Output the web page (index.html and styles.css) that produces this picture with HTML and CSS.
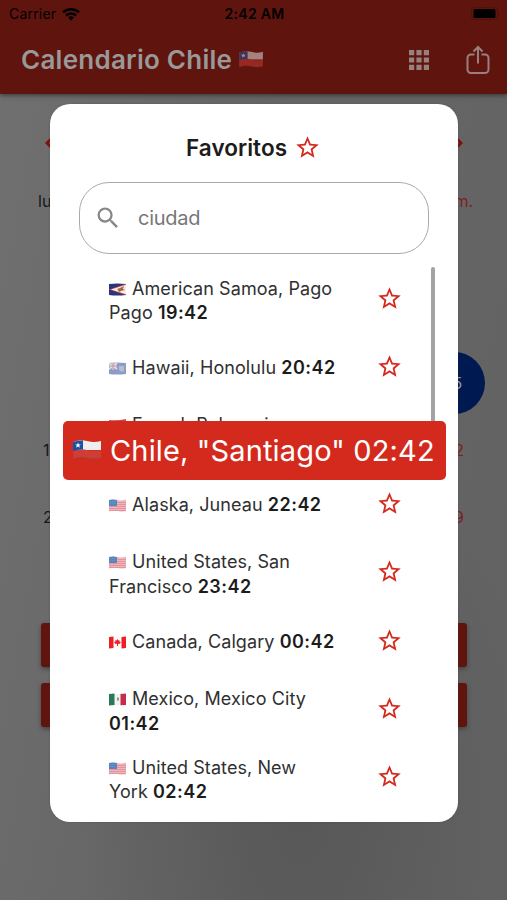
FILE: index.html
```html
<!DOCTYPE html>
<html lang="es">
<head>
<meta charset="utf-8">
<title>Calendario Chile</title>
<link rel="stylesheet" href="styles.css">
</head>
<body>
<svg class="defs" width="0" height="0" aria-hidden="true">
  <symbol id="star" viewBox="0 0 24 24"><path d="M22 9.24l-7.19-.62L12 2 9.19 8.63 2 9.24l5.46 4.73L5.82 21 12 17.27 18.18 21l-1.63-7.03L22 9.24zM12 15.4l-3.76 2.27 1-4.28-3.32-2.88 4.38-.38L12 6.1l1.71 4.04 4.38.38-3.32 2.88 1 4.28L12 15.4z"/></symbol>
  <symbol id="chile" viewBox="0 0 28 20"><path fill="#eee" d="M0 2Q7-1 14 1T28 1V10H0z"/><path fill="#cf3e36" d="M0 11Q7 8 14 10T28 10V18Q21 20 14 18T0 19z"/><path fill="#1951a5" d="M0 2Q5 0 10 .5V9.500Q5 9 0 11z"/><path fill="#fff" d="M5 2.500l.8 2h2L6.200 5.800l.6 2L5 6.600 3.200 7.800l.6-2L2.200 4.500h2z"/><path fill="none" stroke="#555" stroke-opacity=".4" d="M.5 18.500Q7 17 14 18T27.500 18"/></symbol>
  <symbol id="usa" viewBox="0 0 17 13"><path fill="#efb5bd" d="M0 1Q4 0 8 1T17 .5V12Q13 13 9 12T0 12.500z"/><path stroke="#e28d99" stroke-width=".9" d="M0 3.500h17M0 5.500h17M0 7.500h17M0 9.500h17M0 11.500h17"/><path fill="#5785bd" d="M0 1Q4 0 8 1V7H0z"/><path stroke="#7d9fce" stroke-width=".6" stroke-dasharray="1 1" d="M1 2.500h6M1 4.500h6"/></symbol>
  <symbol id="samoa" viewBox="0 0 17 13"><path fill="#29347c" d="M0 1Q8 0 17 1V12Q8 13 0 12z"/><path fill="#c94b53" d="M0 6.500L17 .8V12.200z"/><path fill="#f2eeee" d="M2 6.500L17 1.800V11.200z"/><path fill="#a66a35" d="M8 6l3-1 4-2-1 3 2 1-4 1-2 1-1-2z"/></symbol>
  <symbol id="hawaii" viewBox="0 0 17 13"><path fill="#8d9bc7" d="M0 1Q8 0 17 1V12Q8 13 0 12z"/><path stroke="#dfdfe9" stroke-width="1.800" d="M0 1l8 6M8 1L0 7M4 1v7M0 4h8"/><path stroke="#cd8190" stroke-width=".9" d="M0 4h8M4 1v7"/><path fill="#b9bcca" d="M10 4h5v5l-2 1-3-2z"/></symbol>
  <symbol id="canada" viewBox="0 0 17 13"><path fill="#fafafa" d="M0 1h17v11H0z"/><path fill="#ec2026" d="M0 1l4.500-.5V12L0 12.500zM12.500 1L17 .5V12l-4.500.5zM8.500 3l1 1.500 1-.5-.2 1.500L12 6l-1.500 2-1.500-.2V10H8V7.800L6.500 8 5 6l1.500-.5L6.300 4l1.200.5z"/></symbol>
  <symbol id="mexico" viewBox="0 0 17 13"><path fill="#f2f2f2" d="M0 1h17v11H0z"/><path fill="#297958" d="M0 1l5.500-.5V12L0 12.500z"/><path fill="#c52c4d" d="M11.500 1L17 .5V12l-5.500.3z"/><path fill="#8a9a77" d="M8 4l2 1v2l-1 1-1-1z"/></symbol>
  <symbol id="polynesia" viewBox="0 0 17 13"><path fill="#fafafa" d="M0 1h17v11H0z"/><path fill="#ce4a4e" d="M0 1Q8 2 17 0V4H0zM0 9h17v3H0z"/></symbol>
</svg>
<div class="screen">
  <div class="app">
    <header class="top">
      <div class="status">
        <div class="carrier">Carrier
          <svg width="18" height="14" viewBox="0 0 18 14"><g fill="none" stroke="#000" stroke-width="2.500"><path d="M1 5.400a11.500 11.500 0 0 1 16 0"/><path d="M4 8.500a7.200 7.200 0 0 1 10 0"/></g><path d="M6.100 10.600a4.300 4.300 0 0 1 5.800 0L9 13.700z"/></svg>
        </div>
        <div class="clock">2:42 AM</div>
        <div class="battery"><svg width="29" height="14" viewBox="0 0 29 14"><rect x=".5" y=".5" width="26" height="12" rx="3.500" fill="none" stroke="#4e110b"/><rect x="2.500" y="2" width="22" height="9" rx="1.500"/><path fill="#450f0a" d="M27.500 4.500q1.500 2 0 4z"/></svg></div>
      </div>
      <div class="bar">
        <h1>Calendario Chile</h1>
        <svg class="bar-flag" width="24" height="17"><use href="#chile"/></svg>
        <svg class="grid-icon" width="20" height="20" viewBox="0 0 20 20"><path d="M0 0h5.200v5.200H0zM7.400 0h5.200v5.200H7.400zM14.800 0H20v5.200h-5.200zM0 7.400h5.200v5.200H0zM7.400 7.400h5.200v5.200H7.400zM14.800 7.400H20v5.200h-5.200zM0 14.800h5.200V20H0zM7.400 14.800h5.200V20H7.400zM14.800 14.800H20V20h-5.200z"/></svg>
        <svg class="share-icon" width="24" height="30" viewBox="0 0 24 30"><path d="M8.500 9.500H5A3.500 3.500 0 0 0 1.500 13v11.500A3.500 3.500 0 0 0 5 28h14a3.500 3.500 0 0 0 3.500-3.500V13A3.500 3.500 0 0 0 19 9.500h-3.500M12 18.500V2.500M7.500 6.500L12 2l4.500 4.500"/></svg>
      </div>
    </header>
    <div class="month"><svg width="12" height="12" viewBox="0 0 12 12"><path d="M0 6l5-5 2 2-3 3 3 3-2 2z"/></svg><svg width="12" height="12" viewBox="0 0 12 12"><path d="M12 6L7 1 5 3l3 3-3 3 2 2z"/></svg></div>
    <div class="week names"><span>lun.</span><span class="red">dom.</span></div>
    <div class="week"><span></span><span class="today">15</span></div>
    <div class="week"><span class="num">16</span><span class="red num">22</span></div>
    <div class="week"><span class="num">23</span><span class="red num">29</span></div>
    <div class="actions"><div class="action"></div><div class="action"></div></div>
  </div>
  <div class="dialog">
    <h2>Favoritos <svg class="star"><use href="#star"/></svg></h2>
    <div class="search"><svg width="28" height="28" viewBox="0 0 24 24"><path d="M15.500 14h-.79l-.28-.27A6.470 6.470 0 0 0 16 9.500 6.500 6.500 0 1 0 9.500 16c1.610 0 3.090-.59 4.230-1.570l.27.28v.79l5 4.990L20.490 19l-4.990-5zm-6 0C7.010 14 5 11.990 5 9.500S7.010 5 9.500 5 14 7.010 14 9.500 11.990 14 9.500 14z"/></svg><span>ciudad</span></div>
    <div class="list">
      <div class="row"><p><svg class="flag"><use href="#samoa"/></svg>American Samoa, Pago<br>Pago <b>19:42</b></p><svg class="star"><use href="#star"/></svg></div>
      <div class="row single"><p><svg class="flag"><use href="#hawaii"/></svg>Hawaii, Honolulu <b>20:42</b></p><svg class="star"><use href="#star"/></svg></div>
      <div class="row covered"><p><svg class="flag"><use href="#polynesia"/></svg>French Polynesia,</p></div>
      <div class="row single"><p><svg class="flag"><use href="#usa"/></svg>Alaska, Juneau <b>22:42</b></p><svg class="star"><use href="#star"/></svg></div>
      <div class="row"><p><svg class="flag"><use href="#usa"/></svg>United States, San<br>Francisco <b>23:42</b></p><svg class="star"><use href="#star"/></svg></div>
      <div class="row single"><p><svg class="flag"><use href="#canada"/></svg>Canada, Calgary <b>00:42</b></p><svg class="star"><use href="#star"/></svg></div>
      <div class="row"><p><svg class="flag"><use href="#mexico"/></svg>Mexico, Mexico City<br><b>01:42</b></p><svg class="star"><use href="#star"/></svg></div>
      <div class="row"><p><svg class="flag"><use href="#usa"/></svg>United States, New<br>York <b>02:42</b></p><svg class="star"><use href="#star"/></svg></div>
    </div>
    <div class="thumb"></div>
  </div>
  <div class="toast"><svg width="28" height="20"><use href="#chile"/></svg><span>Chile, "Santiago" 02:42</span></div>
</div>
</body>
</html>
```
FILE: styles.css
```css
* { box-sizing: border-box; }
body { margin: 0; font-family: Inter, "Liberation Sans", sans-serif; color: #303030; }
h1, h2, p { margin: 0; }
.defs { position: absolute; }
.screen { position: relative; width: 507px; height: 900px; overflow: hidden; }
.app {
  height: 900px;
  background:
    radial-gradient(ellipse 230px 420px at 300px 800px, #575757 0%, #58585800 100%),
    linear-gradient(100deg, #707070 0%, #686868 35%, #626262 100%);
}
.top { height: 94px; background: #60140e; box-shadow: 0 1px 5px #333; }
.status { height: 27px; display: grid; grid-template-columns: 1fr 1fr 1fr; align-items: center; padding: 0 7px 0 9px; color: #000; font-size: 14px; }
.carrier { display: flex; align-items: center; gap: 6px; letter-spacing: .2px; }
.clock { text-align: center; font-weight: 600; letter-spacing: .3px; }
.battery { display: flex; justify-content: flex-end; }
.bar { height: 65px; display: flex; align-items: center; padding: 0 17px 0 21px; }
h1 { font-size: 26px; font-weight: 600; color: #999; letter-spacing: .25px; line-height: 30px; white-space: nowrap; }
.bar-flag { margin-left: 7px; opacity: .5; }
.grid-icon { margin-left: auto; fill: #98807e; }
.share-icon { margin-left: 37px; fill: none; stroke: #98807e; stroke-width: 2; }
.month { height: 96px; display: flex; justify-content: space-between; padding: 2px 44px 0 45px; align-items: center; fill: #810f0b; }
.week { height: 67px; display: flex; justify-content: space-between; align-items: center; padding: 0 43px; font-size: 16px; color: #161616; }
.names { height: 22px; padding: 0 34px 0 38px; margin-bottom: 137px; }
.red { color: #7b2020; }
.today { width: 62px; height: 62px; border-radius: 50%; background: #001951; color: #999; display: flex; align-items: center; justify-content: center; margin-right: -21px; }
.actions { margin-top: 73px; padding: 0 40px 0 41px; display: grid; gap: 16px; }
.action { height: 44px; border-radius: 3px; background: #60140e; box-shadow: 0 2px 4px #444; }
.dialog { position: absolute; left: 50px; top: 104px; width: 408px; height: 718px; border-radius: 20px; background: #fff; padding: 27px 29px 0; box-shadow: 0 0 2px #4448; overflow: hidden; }
h2 { height: 32px; display: flex; justify-content: center; align-items: center; gap: 7px; padding-right: 1px; font-size: 22.5px; font-weight: 600; letter-spacing: .05px; color: #1c1c1c; }
.star { width: 27px; height: 27px; fill: #d42a1e; flex: none; }
.search { height: 72px; margin-top: 19px; border: 1px solid #aaa; border-radius: 30px; display: flex; align-items: center; padding-left: 14px; gap: 16px; fill: #888; color: #777; font-size: 20px; letter-spacing: -.25px; }
.list { margin-top: 13px; padding-left: 30px; }
.row { height: 68.4px; display: flex; align-items: center; justify-content: space-between; padding-right: 26px; }
.row p { font-size: 18px; line-height: 24.400px; letter-spacing: .08px; white-space: nowrap; }
.single p { margin-top: -2px; }
.covered { align-items: flex-start; padding-top: 9px; }
.row .star { position: relative; top: -3px; }
b { font-weight: 600; letter-spacing: .45px; color: #1c1c1c; }
.flag { width: 17px; height: 13px; margin-right: 6px; vertical-align: -1px; }
.thumb { position: absolute; left: 381px; top: 163px; width: 4px; height: 160px; background: #a3a3a3; border-radius: 2px; }
.toast { position: absolute; left: 62.5px; top: 421px; width: 383px; height: 58.5px; border-radius: 5px; background: #d42a1e; color: #fff; display: flex; align-items: center; gap: 9px; padding-left: 10.5px; font-size: 29px; letter-spacing: .15px; white-space: nowrap; }
```
